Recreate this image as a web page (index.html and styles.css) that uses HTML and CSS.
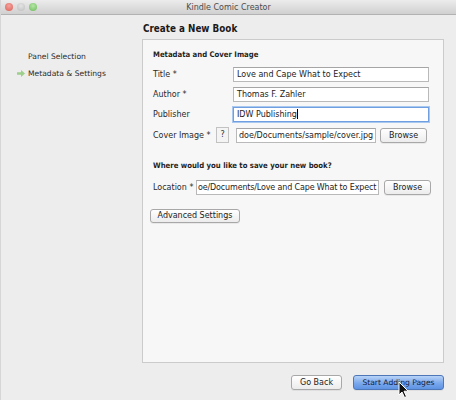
FILE: index.html
```html
<!DOCTYPE html>
<html>
<head>
<meta charset="utf-8">
<link rel="stylesheet" href="styles.css">
</head>
<body>
<div class="window">
  <div class="titlebar">
    <div class="lights">
      <span class="light red"></span>
      <span class="light gray"></span>
      <span class="light green"></span>
    </div>
    <div class="title">Kindle Comic Creator</div>
  </div>
  <div class="content">
    <div class="sidebar">
      <div class="nav-item">Panel Selection</div>
      <div class="nav-item current">
        <svg class="arrow" width="8" height="7" viewBox="0 0 8 7"><path d="M0 2.2 H4 V0 L8 3.5 L4 7 V4.8 H0 Z" fill="#9ccf8a"/></svg>
        Metadata &amp; Settings
      </div>
    </div>
    <div class="main">
      <h1 class="heading">Create a New Book</h1>
      <div class="panel">
        <div class="section-title">Metadata and Cover Image</div>
        <div class="row">
          <span class="label">Title *</span>
          <span class="input wide">Love and Cape What to Expect</span>
        </div>
        <div class="row">
          <span class="label">Author *</span>
          <span class="input wide">Thomas F. Zahler</span>
        </div>
        <div class="row">
          <span class="label">Publisher</span>
          <span class="input wide focused">IDW Publishing<span class="caret"></span></span>
        </div>
        <div class="row cover-row">
          <span class="label short">Cover Image *</span>
          <span class="help">?</span>
          <span class="input cover">doe/Documents/sample/cover.jpg</span>
          <span class="btn browse">Browse</span>
        </div>
        <div class="section-title second">Where would you like to save your new book?</div>
        <div class="row location-row">
          <span class="label loc">Location *</span>
          <span class="input location">oe/Documents/Love and Cape What to Expect</span>
          <span class="btn browse">Browse</span>
        </div>
        <div class="row adv-row">
          <span class="btn adv">Advanced Settings</span>
        </div>
      </div>
      <div class="footer">
        <span class="btn back">Go Back</span>
        <span class="btn primary">Start Adding Pages</span>
      </div>
    </div>
  </div>
  <svg class="cursor" width="12" height="18" viewBox="0 0 12 18"><path d="M1 1 L1 14 L4 11 L6.5 16.5 L8.5 15.6 L6 10.2 L10.2 10.2 Z" fill="#111" stroke="#fff" stroke-width="1"/></svg>
</div>
</body>
</html>
```
FILE: styles.css
```css
* { box-sizing: border-box; }
html, body { margin: 0; padding: 0; }
body {
  font-family: "DejaVu Sans", "Liberation Sans", sans-serif;
  font-size: 8px;
  color: #222;
}
.window {
  position: relative;
  width: 456px;
  height: 400px;
  background: #eeedee;
  border-left: 1px solid #d6d6d6;
  overflow: hidden;
  display: flex;
  flex-direction: column;
}
.titlebar {
  height: 15px;
  flex: 0 0 15px;
  background: linear-gradient(#ececec, #d0d0d0);
  border-bottom: 1px solid #b2b2b2;
  display: flex;
  align-items: center;
  position: relative;
}
.lights {
  display: flex;
  gap: 4px;
  padding-left: 4px;
}
.light {
  width: 8px;
  height: 8px;
  border-radius: 50%;
  display: block;
}
.light.red { background: radial-gradient(circle at 50% 35%, #f4a39c, #dd5e55); }
.light.gray { background: radial-gradient(circle at 50% 35%, #e4e4e4, #bdbdbd); }
.light.green { background: radial-gradient(circle at 50% 35%, #b6e6a6, #6cbb5a); }
.title {
  position: absolute;
  left: 0; right: 0;
  text-align: center;
  color: #4c4c4c;
  font-size: 8px;
}
.content {
  flex: 1;
  display: flex;
}
.sidebar {
  width: 141px;
  flex: 0 0 141px;
  padding-top: 33px;
  font-size: 7.6px;
}
.nav-item {
  height: 17px;
  line-height: 17px;
  padding-left: 27px;
  position: relative;
  color: #2a2a2a;
}
.arrow {
  position: absolute;
  left: 16px;
  top: 5px;
}
.main {
  flex: 1;
  display: flex;
  flex-direction: column;
  padding-right: 12px;
}
.heading {
  margin: 6px 0 0 1px;
  font-family: "DejaVu Sans Condensed", "DejaVu Sans", sans-serif;
  font-size: 9.8px;
  line-height: 16px;
  font-weight: bold;
  color: #1a1a1a;
}
.panel {
  margin-top: 2px;
  width: 302px;
  height: 324px;
  background: #f7f7f7;
  border: 1px solid #cbcbcb;
  padding: 9px 0 0 10px;
}
.section-title {
  font-family: "DejaVu Sans Condensed", "DejaVu Sans", sans-serif;
  font-weight: bold;
  font-size: 7.7px;
  line-height: 12px;
  height: 12px;
  color: #1f1f1f;
}
.section-title.second { margin-top: 15px; }
.row {
  height: 20px;
  display: flex;
  align-items: center;
  margin-top: 0;
}
.section-title + .row { margin-top: 3px; }
.cover-row { margin-top: 1px; }
.section-title.second + .row { margin-top: 5px; }
.adv-row { margin-top: 8px; height: 21px; margin-left: -3px; }
.label {
  width: 80px;
  flex: 0 0 80px;
  color: #2a2a2a;
}
.label.short { width: 63px; flex-basis: 63px; }
.label.loc { width: 43px; flex-basis: 43px; }
.input {
  height: 15px;
  line-height: 13px;
  background: #fff;
  border: 1px solid #b9b9b9;
  border-top-color: #a5a5a5;
  padding: 0 3px;
  white-space: nowrap;
  overflow: hidden;
  color: #1c1c1c;
  display: block;
}
.input.wide { width: 196px; }
.input.focused {
  border-color: #6f9fe0;
  box-shadow: 0 0 0 1px #a9c8f0;
}
.caret {
  display: inline-block;
  width: 1px;
  height: 10px;
  background: #000;
  vertical-align: -2px;
}
.help {
  width: 13px;
  height: 16px;
  border: 1px solid #c2c2c2;
  background: #f4f4f4;
  text-align: center;
  line-height: 14px;
  font-size: 8px;
  color: #333;
  margin-right: 7px;
}
.input.cover { width: 140px; padding: 0 2px; }
.input.location { width: 183px; padding: 0 1px; letter-spacing: -0.15px; }
.btn {
  display: inline-block;
  height: 15px;
  line-height: 13px;
  text-align: center;
  border: 1px solid #a8a8a8;
  border-radius: 3px;
  background: linear-gradient(#ffffff, #ececec);
  color: #222;
  box-shadow: 0 1px 0 rgba(0,0,0,0.06);
}
.btn.browse { width: 47px; margin-left: 4px; }
.location-row .btn.browse { margin-left: 5px; }
.btn.adv { width: 90px; height: 14px; line-height: 12px; }
.footer {
  margin-top: 12px;
  display: flex;
  justify-content: flex-end;
  gap: 11px;
}
.btn.back { width: 51px; }
.btn.primary {
  width: 91px;
  font-size: 7.6px;
  background: linear-gradient(#b8d3f7, #7aa8ec 55%, #5d92e3);
  border-color: #4e77b8;
  color: #13213a;
}
.cursor {
  position: absolute;
  left: 397px;
  top: 381px;
}
```
